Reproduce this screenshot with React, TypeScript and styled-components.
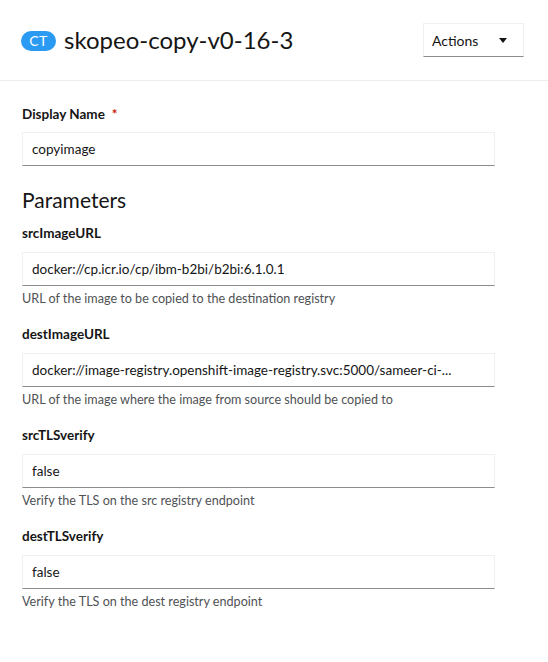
import React from "react";
import styled, { createGlobalStyle } from "styled-components";

const Global = createGlobalStyle`
  html, body { margin: 0; padding: 0; background: #fff; }
  body { font-family: "Lato", "Open Sans", sans-serif; color: #151515; }
  * { box-sizing: border-box; }
`;

const Page = styled.div`
  width: 548px;
  min-height: 662px;
  background: #fff;
`;

const Header = styled.header`
  display: flex;
  align-items: center;
  justify-content: space-between;
  padding: 23px 24px 23px 21px;
  border-bottom: 1px solid #ededed;
`;

const TitleRow = styled.div`
  display: flex;
  align-items: center;
  gap: 8px;
`;

const Badge = styled.span`
  display: inline-flex;
  align-items: center;
  justify-content: center;
  width: 35px;
  height: 20px;
  margin-top: 1px;
  border-radius: 10px;
  background: #2b9af3;
  color: #fff;
  font-size: 14px;
  font-weight: 400;
  letter-spacing: 0.5px;
`;

const Title = styled.h1`
  margin: 0;
  font-size: 24px;
  font-weight: 400;
  line-height: 32px;
  color: #151515;
`;

const ActionsButton = styled.button`
  display: flex;
  align-items: center;
  justify-content: space-between;
  width: 101px;
  height: 34px;
  padding: 0 16px 0 8px;
  background: #fff;
  border: 1px solid #f0f0f0;
  border-bottom-color: #8a8d90;
  font-family: inherit;
  font-size: 14px;
  color: #151515;
`;

const Caret = styled.span`
  width: 0;
  height: 0;
  border-left: 4px solid transparent;
  border-right: 4px solid transparent;
  border-top: 5px solid #151515;
`;

const Form = styled.div`
  display: flex;
  flex-direction: column;
  padding: 23px 53px 40px 22px;
`;

const Group = styled.div<{ $gap?: number }>`
  display: flex;
  flex-direction: column;
  margin-bottom: ${(p) => p.$gap ?? 16}px;
`;

const Label = styled.label<{ $gap?: number }>`
  font-size: 13.5px;
  font-weight: 700;
  line-height: 20px;
  margin-bottom: ${(p) => p.$gap ?? 9}px;
  color: #151515;
`;

const Required = styled.span`
  color: #c9190b;
  margin-left: 7px;
`;

const Input = styled.div`
  height: 34px;
  display: flex;
  align-items: center;
  padding: 0 9px;
  border: 1px solid #f0f0f0;
  border-bottom-color: #8a8d90;
  font-size: 13.5px;
  color: #151515;
  white-space: nowrap;
  overflow: hidden;
`;

const Helper = styled.div`
  margin-top: 4px;
  font-size: 12.6px;
  line-height: 18px;
  color: #4f5255;
`;

const Heading = styled.h2`
  margin: 20px 0 9px;
  font-size: 21px;
  font-weight: 400;
  line-height: 28px;
  color: #151515;
`;

const params = [
  {
    name: "srcImageURL",
    value: "docker://cp.icr.io/cp/ibm-b2bi/b2bi:6.1.0.1",
    help: "URL of the image to be copied to the destination registry",
  },
  {
    name: "destImageURL",
    value: "docker://image-registry.openshift-image-registry.svc:5000/sameer-ci-...",
    help: "URL of the image where the image from source should be copied to",
  },
  {
    name: "srcTLSverify",
    value: "false",
    help: "Verify the TLS on the src registry endpoint",
  },
  {
    name: "destTLSverify",
    value: "false",
    help: "Verify the TLS on the dest registry endpoint",
  },
];

export default function App() {
  return (
    <Page>
      <Global />
      <Header>
        <TitleRow>
          <Badge>CT</Badge>
          <Title>skopeo-copy-v0-16-3</Title>
        </TitleRow>
        <ActionsButton>
          Actions
          <Caret />
        </ActionsButton>
      </Header>
      <Form>
        <Group $gap={0}>
          <Label $gap={8}>
            Display Name<Required>*</Required>
          </Label>
          <Input>copyimage</Input>
        </Group>
        <Heading>Parameters</Heading>
        {params.map((p) => (
          <Group key={p.name}>
            <Label>{p.name}</Label>
            <Input>{p.value}</Input>
            <Helper>{p.help}</Helper>
          </Group>
        ))}
      </Form>
    </Page>
  );
}
